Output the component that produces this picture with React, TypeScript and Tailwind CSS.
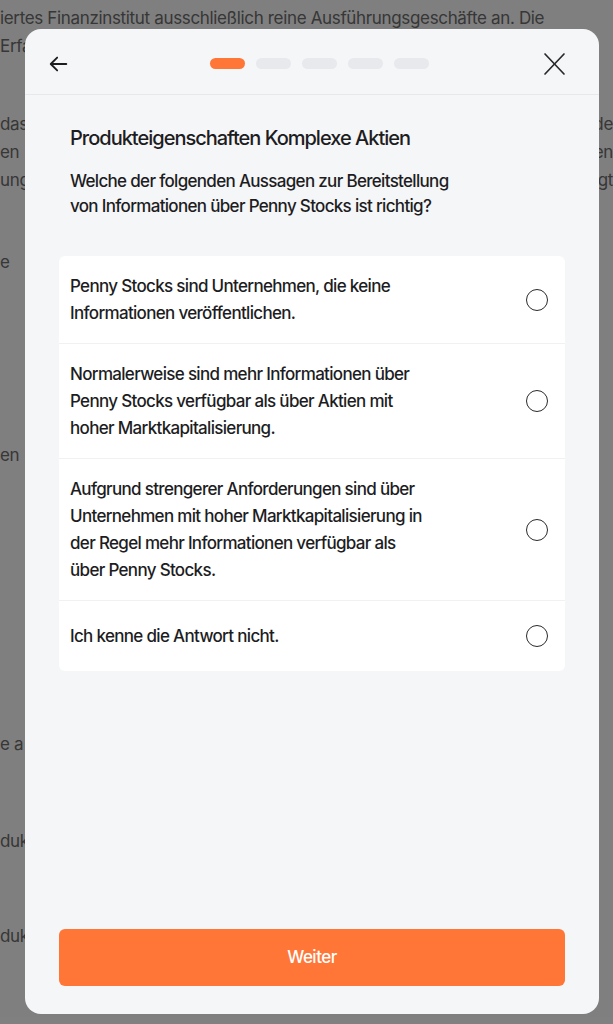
import React from "react";

const options = [
  "Penny Stocks sind Unternehmen, die keine Informationen veröffentlichen.",
  "Normalerweise sind mehr Informationen über Penny Stocks verfügbar als über Aktien mit hoher Marktkapitalisierung.",
  "Aufgrund strengerer Anforderungen sind über Unternehmen mit hoher Marktkapitalisierung in der Regel mehr Informationen verfügbar als über Penny Stocks.",
  "Ich kenne die Antwort nicht.",
];

function BgLine({ left, right, className = "" }: { left: string; right?: string; className?: string }) {
  return (
    <div className={`flex justify-between whitespace-nowrap h-[28px] leading-[28px] ${className}`}>
      <span>{left}</span>
      {right && <span>{right}</span>}
    </div>
  );
}

export default function App() {
  return (
    <div className="relative h-[1024px] w-full overflow-hidden bg-white font-['Inter',sans-serif]">
      {/* page behind the modal */}
      <div className="pt-[4px] text-[17px] tracking-[-0.02em] text-[#6e6e6e]">
        <div className="h-[28px] overflow-hidden whitespace-nowrap leading-[28px]">
          iertes Finanzinstitut ausschließlich reine Ausführungsgeschäfte an. Die
        </div>
        <BgLine left="Erfahrungen" />
        <div className="mt-[50px]">
          <BgLine left="das" right="de" />
          <BgLine left="en" right="en" />
          <BgLine left="ung" right="gt" />
        </div>
        <BgLine left="e" className="mt-[54px]" />
        <BgLine left="en" className="mt-[165px]" />
        <BgLine left="e a" className="mt-[261px]" />
        <BgLine left="duk" className="mt-[69px]" />
        <BgLine left="duk" className="mt-[67px]" />
      </div>

      {/* overlay */}
      <div className="absolute inset-0 bg-black/50" />

      {/* modal */}
      <div className="absolute left-[25px] right-[14px] top-[29px] bottom-[10px] flex flex-col rounded-[16px] bg-[#f5f6f8]">
        <div className="flex h-[66px] items-center border-b border-[#e6e8eb] pl-[22px] pr-[33px] pt-[4px]">
          <button className="flex h-6 w-6 items-center justify-center text-[#1d1d1f]">
            <svg width="22" height="22" viewBox="0 0 24 24" fill="none" stroke="currentColor" strokeWidth="2" strokeLinecap="round" strokeLinejoin="round">
              <path d="M20 12H4" />
              <path d="M10 5l-7 7 7 7" />
            </svg>
          </button>
          <div className="ml-[26px] flex flex-1 items-center justify-center gap-[11px]">
            <div className="h-[11px] w-[35px] rounded-full bg-[#ff7637]" />
            <div className="h-[11px] w-[35px] rounded-full bg-[#e8e9ec]" />
            <div className="h-[11px] w-[35px] rounded-full bg-[#e8e9ec]" />
            <div className="h-[11px] w-[35px] rounded-full bg-[#e8e9ec]" />
            <div className="h-[11px] w-[35px] rounded-full bg-[#e8e9ec]" />
          </div>
          <button className="flex h-6 w-6 items-center justify-center text-[#2a2a2c]">
            <svg width="24" height="24" viewBox="0 0 24 24" fill="none" stroke="currentColor" strokeWidth="1.7" strokeLinecap="round">
              <path d="M3 2l19 20" />
              <path d="M22 2L3 22" />
            </svg>
          </button>
        </div>

        <div className="flex flex-1 flex-col px-[34px]">
          <h1 className="mt-[29px] pl-[11px] text-[20px] font-medium leading-[28px] tracking-[-0.05em] text-[#1d1d1f]">
            Produkteigenschaften Komplexe Aktien
          </h1>
          <p className="mt-[17px] pl-[11px] pr-[100px] text-[17px] font-medium leading-[25px] tracking-[-0.04em] text-[#1d1d1f]">
            Welche der folgenden Aussagen zur Bereitstellung von Informationen über Penny Stocks ist richtig?
          </p>

          <div className="mt-[37px] rounded-[6px] bg-white">
            {options.map((o, i) => (
              <div
                key={i}
                className={`flex items-center gap-[24px] pl-[11px] pr-[17px] ${i < options.length - 1 ? "border-b border-[#f0f1f3] py-[16.5px]" : "min-h-[70px] py-[17px]"}`}
              >
                <span className="flex-1 pr-[70px] text-[17px] font-medium leading-[27px] tracking-[-0.04em] text-[#1d1d1f]">{o}</span>
                <span className="h-[22px] w-[22px] shrink-0 rounded-full border-[1.5px] border-[#2a2a2c]" />
              </div>
            ))}
          </div>

          <div className="flex-1" />

          <button className="mb-[28px] h-[57px] w-full rounded-[6px] bg-[#ff7637] text-[17px] font-medium tracking-[-0.03em] text-white">
            Weiter
          </button>
        </div>
      </div>
    </div>
  );
}
